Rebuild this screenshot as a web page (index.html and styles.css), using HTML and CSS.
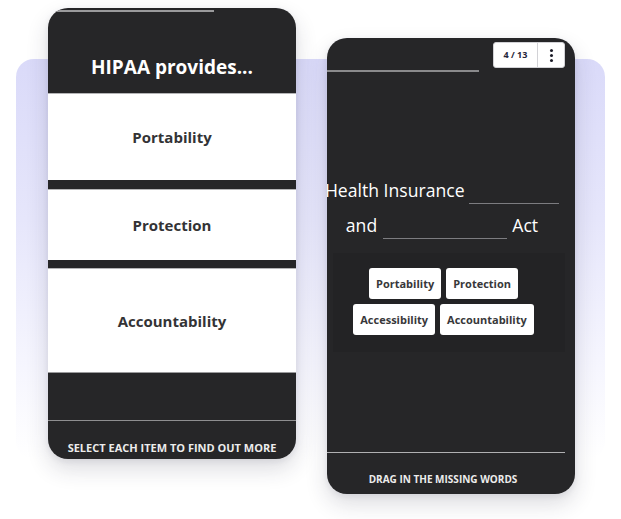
FILE: index.html
```html
<!DOCTYPE html>
<html lang="en">
<head>
<meta charset="utf-8">
<title>HIPAA</title>
<link rel="stylesheet" href="styles.css">
</head>
<body>
<div class="stage">
  <div class="backdrop"></div>
  <div class="cards">
    <section class="card card-left">
      <div class="card-head">
        <div class="progress progress-left"></div>
        <h1 class="title">HIPAA provides...</h1>
      </div>
      <div class="item item-a">Portability</div>
      <div class="band band-a"></div>
      <div class="item item-b">Protection</div>
      <div class="band band-b"></div>
      <div class="item item-c">Accountability</div>
      <div class="spacer-left"></div>
      <footer class="card-footer footer-left">SELECT EACH ITEM TO FIND OUT MORE</footer>
    </section>

    <section class="card card-right">
      <div class="topbar">
        <div class="progress progress-right"></div>
        <div class="counter">
          <span class="count">4 / 13</span>
          <span class="menu"><i></i><i></i><i></i></span>
        </div>
      </div>
      <div class="sentence">
        <div class="line">Health Insurance <span class="blank blank-a"></span></div>
        <div class="line">and <span class="blank blank-b"></span> Act</div>
      </div>
      <div class="bank">
        <div class="chip">Portability</div>
        <div class="chip">Protection</div>
        <div class="chip">Accessibility</div>
        <div class="chip">Accountability</div>
      </div>
      <div class="spacer-right"></div>
      <footer class="card-footer footer-right">DRAG IN THE MISSING WORDS</footer>
    </section>
  </div>
</div>
</body>
</html>
```

FILE: styles.css
```css
* { box-sizing: border-box; }

html, body {
  margin: 0;
  padding: 0;
  background: #ffffff;
}

body {
  font-family: "Open Sans", "Noto Sans", "Liberation Sans", sans-serif;
}

.stage {
  position: relative;
  width: 621px;
  height: 519px;
  overflow: hidden;
}

.backdrop {
  position: absolute;
  left: 16px;
  top: 59px;
  width: 589px;
  height: 400px;
  border-radius: 18px;
  background: linear-gradient(180deg, #dadaf9 0%, #e6e6fb 40%, #f5f5fe 75%, #ffffff 100%);
}

.cards {
  position: relative;
  display: flex;
  align-items: flex-start;
  gap: 31px;
  padding-left: 48px;
  padding-top: 8px;
}

.card {
  width: 248px;
  background: #262628;
  border-radius: 20px;
  overflow: hidden;
  display: flex;
  flex-direction: column;
  box-shadow: 0 10px 22px rgba(40, 40, 60, 0.16), 0 2px 6px rgba(40, 40, 60, 0.08);
}

/* ---------- left card ---------- */
.card-left {
  height: 451px;
}

.card-head {
  height: 85px;
  display: flex;
  flex-direction: column;
}

.progress {
  height: 2px;
  background: #9a9a9c;
}

.progress-left {
  width: 160px;
  margin: 2px 0 0 6px;
}

.title {
  margin: 0;
  padding-top: 43px;
  text-align: center;
  color: #ffffff;
  font-size: 19px;
  line-height: 24px;
  font-weight: 700;
}

.item {
  background: #ffffff;
  color: #333335;
  font-size: 15px;
  font-weight: 700;
  display: flex;
  align-items: center;
  justify-content: center;
  border-top: 1px solid #b4b4b6;
}

.item-a { height: 87px; }
.item-b { height: 71px; }
.item-c { height: 104px; }

.band { background: #262628; }
.band-a { height: 9px; }
.band-b { height: 8px; }

.spacer-left {
  height: 48px;
  border-top: 1px solid #9a9a9c;
}

.card-footer {
  border-top: 1px solid #8e8e90;
  color: #ececec;
  font-weight: 700;
  font-size: 10px;
  line-height: 14px;
  text-align: center;
  white-space: nowrap;
}

.footer-left {
  height: 38px;
  padding-top: 20px;
  font-size: 11px;
}

/* ---------- right card ---------- */
.card-right {
  height: 456px;
  margin-top: 30px;
}

.topbar {
  height: 34px;
  display: flex;
  justify-content: space-between;
  align-items: flex-start;
  padding: 4px 10px 0 0;
}

.progress-right {
  width: 152px;
  align-self: flex-end;
  background: #8a8a8c;
}

.counter {
  display: flex;
  height: 26px;
  width: 72px;
  background: #ffffff;
  border: 1px solid #d2d2d6;
  border-radius: 3px;
}

.count {
  width: 44px;
  border-right: 1px solid #d2d2d6;
  color: #26263a;
  font-size: 9px;
  font-weight: 700;
  line-height: 24px;
  text-align: center;
}

.menu {
  flex: 1;
  display: flex;
  flex-direction: column;
  align-items: center;
  justify-content: center;
  gap: 2px;
}

.menu i {
  display: block;
  width: 3px;
  height: 3px;
  border-radius: 50%;
  background: #1c1c28;
}

.sentence {
  margin: 101px 0 0 -8px;
  width: 246px;
  color: #ffffff;
  font-size: 17.6px;
  font-weight: 500;
  line-height: 35px;
  text-align: center;
}

.line {
  white-space: nowrap;
}

.blank {
  display: inline-block;
  height: 20px;
  border-bottom: 1px solid #7c7c80;
  vertical-align: -7px;
}

.blank-a { width: 90px; }
.blank-b { width: 124px; margin: 0 1px; }

.bank {
  margin: 10px 10px 0 6px;
  height: 99px;
  padding: 15px 19px 0 8px;
  background: #232325;
  display: flex;
  flex-wrap: wrap;
  justify-content: center;
  align-content: flex-start;
  gap: 5px;
}

.chip {
  height: 31px;
  padding: 0 7px;
  background: #ffffff;
  border-radius: 3px;
  color: #38383a;
  font-size: 11px;
  font-weight: 700;
  line-height: 31px;
}

.spacer-right {
  flex: 1;
}

.footer-right {
  width: 238px;
  height: 42px;
  padding: 19px 6px 0 0;
  font-size: 10px;
  border-top-color: #b0b0b2;
}
```
